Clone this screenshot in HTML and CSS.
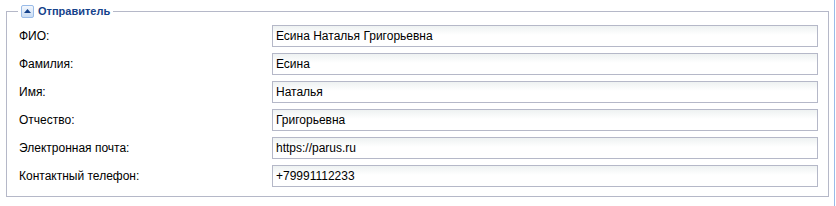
FILE: index.html
```html
<!DOCTYPE html>
<html lang="ru">
<head>
    <meta charset="UTF-8">
    <title>Отправитель</title>
    <link rel="stylesheet" href="styles.css">
</head>
<body>
    <div class="page">
        <fieldset class="sender">
            <legend>
                <span class="toggle">
                    <svg width="7" height="4" viewBox="0 0 7 4"><path d="M0 4 L3.5 0 L7 4 Z" fill="#15428b"/></svg>
                </span>
                <span class="legend-title">Отправитель</span>
            </legend>
            <div class="form-grid">
                <label for="fio">ФИО:</label>
                <input type="text" id="fio" value="Есина Наталья Григорьевна">

                <label for="last-name">Фамилия:</label>
                <input type="text" id="last-name" value="Есина">

                <label for="first-name">Имя:</label>
                <input type="text" id="first-name" value="Наталья">

                <label for="middle-name">Отчество:</label>
                <input type="text" id="middle-name" value="Григорьевна">

                <label for="email">Электронная почта:</label>
                <input type="text" id="email" value="https://parus.ru">

                <label for="phone">Контактный телефон:</label>
                <input type="text" id="phone" value="+79991112233">
            </div>
        </fieldset>
    </div>
</body>
</html>
```

FILE: styles.css
```css
body {
    margin: 0;
    background: #fff;
    font-family: "Liberation Sans", Arial, sans-serif;
    font-size: 12px;
    color: #000;
}

.page {
    width: 835px;
    height: 206px;
    border-right: 1px solid #99bbe8;
    padding-top: 4px;
    box-sizing: border-box;
}

.sender {
    margin: 0 0 0 6px;
    width: 823px;
    box-sizing: border-box;
    border: 1px solid #b5b8c8;
    padding: 7px 10px 9px 12px;
}

.sender legend {
    display: flex;
    align-items: center;
    gap: 4px;
    padding: 0 3px;
    margin-left: -1px;
    height: 14px;
}

.toggle {
    width: 11px;
    height: 11px;
    border: 1px solid #99bbe8;
    border-radius: 2px;
    background: linear-gradient(#f4f8fd, #c9dcf4);
    display: flex;
    align-items: center;
    justify-content: center;
}

.legend-title {
    font-size: 11px;
    font-weight: bold;
    color: #15428b;
}

.form-grid {
    display: grid;
    grid-template-columns: 253px 1fr;
    row-gap: 6px;
    align-items: center;
}

.form-grid label {
    line-height: 22px;
}

.form-grid input {
    height: 22px;
    box-sizing: border-box;
    border: 1px solid #b5b8c8;
    padding: 0 3px;
    margin: 0;
    font-family: "Liberation Sans", Arial, sans-serif;
    font-size: 12px;
    color: #000;
    background: linear-gradient(#eef2f2, #fff 9px);
    outline: none;
}
```
